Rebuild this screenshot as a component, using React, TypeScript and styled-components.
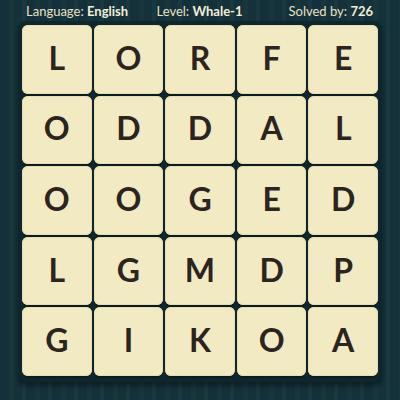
import React from 'react';
import styled, { createGlobalStyle } from 'styled-components';

const GlobalStyle = createGlobalStyle`
  html, body {
    margin: 0;
    padding: 0;
  }
  body {
    font-family: Lato, "Noto Sans", sans-serif;
  }
`;

const Page = styled.div`
  width: 400px;
  height: 400px;
  overflow: hidden;
  box-sizing: border-box;
  background-color: #163239;
  background-image: repeating-linear-gradient(
    90deg,
    #14303a 0px,
    #14303a 9px,
    #19363d 9px,
    #19363d 14px,
    #15313a 14px,
    #15313a 22px,
    #1a383f 22px,
    #1a383f 26px
  );
  display: flex;
  flex-direction: column;
  align-items: center;
`;

const Header = styled.div`
  width: 100%;
  box-sizing: border-box;
  height: 21px;
  padding: 0 27px 0 26px;
  display: grid;
  grid-template-columns: 1fr auto 1fr;
  align-items: center;
  color: #e6e1c4;
  font-size: 13px;
  line-height: 1;
`;

const Info = styled.div<{ $align: 'left' | 'center' | 'right' }>`
  text-align: ${(p) => p.$align};
  white-space: nowrap;
  padding-top: 2px;

  b {
    font-weight: 700;
    color: #f3efd6;
  }
`;

const Board = styled.div`
  width: 364px;
  box-sizing: border-box;
  padding: 4px 4px 6px 4px;
  background: #0f262c;
  border-radius: 8px;
  display: grid;
  grid-template-columns: repeat(5, 1fr);
  gap: 2px;
  box-shadow: 0 4px 4px rgba(5, 15, 18, 0.5);
`;

const Tile = styled.div`
  height: 68.6px;
  border-radius: 6px;
  background: #f2eac3;
  box-shadow: inset 0 0 0 1px #e6ddb2, 0 2px 0 #0a1c20;
  display: flex;
  align-items: center;
  justify-content: center;
  padding-bottom: 3px;
  box-sizing: border-box;
  color: #2b241f;
  font-family: Lato, "Noto Sans", sans-serif;
  font-weight: 700;
  font-size: 32px;
  line-height: 1;
`;

const rows = ['LORFE', 'ODDAL', 'OOGED', 'LGMDP', 'GIKOA'];

export default function App() {
  return (
    <Page>
      <GlobalStyle />
      <Header>
        <Info $align="left">
          Language: <b>English</b>
        </Info>
        <Info $align="center">
          Level: <b>Whale-1</b>
        </Info>
        <Info $align="right">
          Solved by: <b>726</b>
        </Info>
      </Header>
      <Board>
        {rows.join('').split('').map((ch, i) => (
          <Tile key={i}>{ch}</Tile>
        ))}
      </Board>
    </Page>
  );
}
